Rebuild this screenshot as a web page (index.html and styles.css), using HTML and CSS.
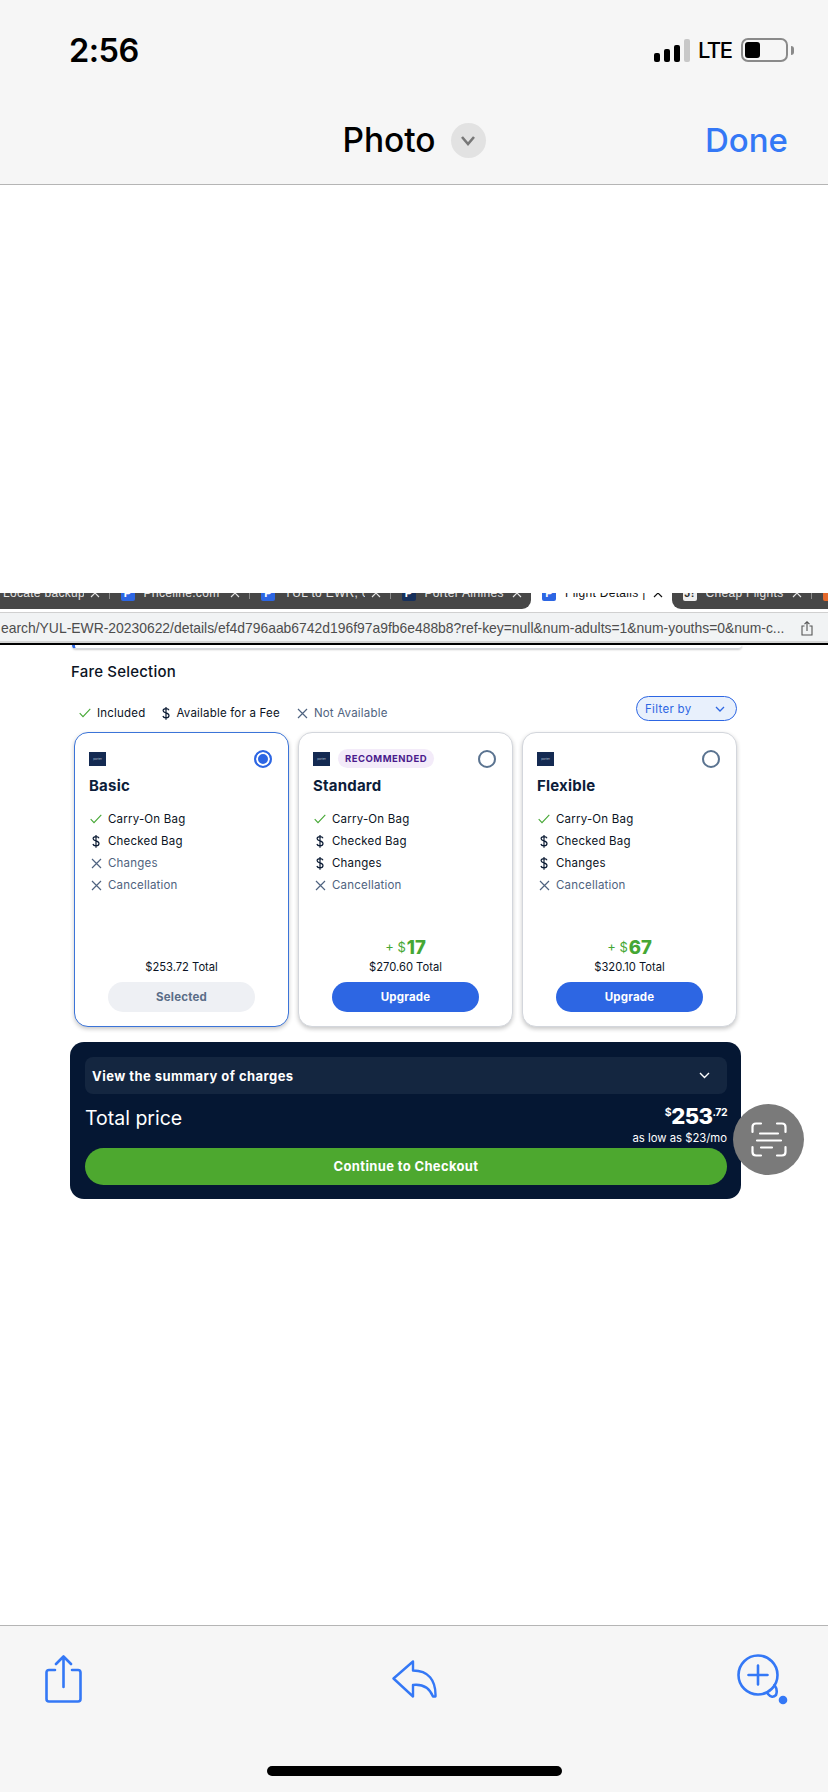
FILE: index.html
```html
<!DOCTYPE html>
<html lang="en">
<head>
  <meta charset="UTF-8" />
  <meta name="viewport" content="width=device-width, initial-scale=1.0"/>
  <title>Photo</title>
  <link rel="stylesheet" href="styles.css">
</head>
<body>
  <svg class="defs" width="0" height="0">
    <symbol id="i-check" viewBox="0 0 12 10"><path d="M.7 5.2 4 8.6 11.3 .8" fill="none" stroke="#45a734" stroke-width="1.1"/></symbol>
    <symbol id="i-cross" viewBox="0 0 11 11"><path d="M1 1 10 10M10 1 1 10" fill="none" stroke="#4f6380" stroke-width="1.2"/></symbol>
    <symbol id="i-fee" viewBox="0 0 8 13"><path d="M7 3.2C6.6 2.2 5.5 1.7 4 1.7 2.3 1.7 1.1 2.5 1.1 3.8 1.1 6.6 7 5.2 7 8.6 7 10 5.7 10.9 4 10.9 2.4 10.9 1.2 10.2.9 9M4 0V12.8" fill="none" stroke="#0a1a33" stroke-width="1.2"/></symbol>
    <symbol id="i-tabx" viewBox="0 0 10 10"><path d="M1 1 9 9M9 1 1 9" fill="none" stroke="currentColor" stroke-width="1.2"/></symbol>
  </svg>

  <header class="topbar">
    <div class="status">
      <span class="time">2:56</span>
      <div class="status-right">
        <div class="signal"><i class="b1"></i><i class="b2"></i><i class="b3"></i><i class="b4"></i></div>
        <span class="lte">LTE</span>
        <div class="battery"><i></i></div>
        <div class="nub"></div>
      </div>
    </div>
    <div class="titlebar">
      <span></span>
      <div class="title">
        <span>Photo</span>
        <span class="title-chev"><svg width="16" height="11" viewBox="0 0 16 11"><path d="M2 2 8 9 14 2" fill="none" stroke="#777" stroke-width="2.6"/></svg></span>
      </div>
      <span class="done">Done</span>
    </div>
  </header>

  <main class="viewer">
    <div class="shot">
      <div class="tabs">
        <div class="tab tab-first"><span class="tab-label">Locate backups</span><svg class="tab-x"><use href="#i-tabx"/></svg><i class="tab-sep"></i></div>
        <div class="tab"><b class="fav">P</b><span class="tab-label">Priceline.com</span><svg class="tab-x"><use href="#i-tabx"/></svg><i class="tab-sep"></i></div>
        <div class="tab"><b class="fav">P</b><span class="tab-label">YUL to EWR, 6/22</span><svg class="tab-x"><use href="#i-tabx"/></svg><i class="tab-sep"></i></div>
        <div class="tab tab-before"><b class="fav fav-porter">P</b><span class="tab-label">Porter Airlines |</span><svg class="tab-x"><use href="#i-tabx"/></svg></div>
        <div class="tab tab-active"><b class="fav">P</b><span class="tab-label">Flight Details | F</span><svg class="tab-x"><use href="#i-tabx"/></svg></div>
        <div class="tab tab-after"><b class="fav fav-white">J!</b><span class="tab-label">Cheap Flights fr</span><svg class="tab-x"><use href="#i-tabx"/></svg><i class="tab-sep"></i></div>
        <div class="tab"><b class="fav fav-orange"></b></div>
      </div>
      <div class="urlbar">
        <span class="url">earch/YUL-EWR-20230622/details/ef4d796aab6742d196f97a9fb6e488b8?ref-key=null&amp;num-adults=1&amp;num-youths=0&amp;num-c...</span>
        <svg class="url-share" width="12" height="15" viewBox="0 0 12 15"><path d="M3.5 5H1V14H11V5H8.5M6 10V1M3.5 3.2 6 .8 8.5 3.2" fill="none" stroke="#555" stroke-width="1.1"/></svg>
      </div>

      <div class="page">
        <div class="prev-card"></div>
        <h2 class="fare-title">Fare Selection</h2>
        <div class="legend">
          <div class="legend-items">
            <span class="legend-item"><svg class="ic ic-check"><use href="#i-check"/></svg>Included</span>
            <span class="legend-item"><svg class="ic ic-fee"><use href="#i-fee"/></svg>Available for a Fee</span>
            <span class="legend-item muted"><svg class="ic ic-cross"><use href="#i-cross"/></svg>Not Available</span>
          </div>
          <div class="filter">Filter by<svg width="10" height="6" viewBox="0 0 10 6"><path d="M1 1 5 5 9 1" fill="none" stroke="#2d66e3" stroke-width="1.3"/></svg></div>
        </div>

        <div class="cards">
          <section class="card card-selected">
            <div class="card-head">
              <div class="logo">porter</div>
              <span class="radio radio-on"></span>
            </div>
            <h3>Basic</h3>
            <ul class="features">
              <li><span class="fi"><svg class="ic ic-check"><use href="#i-check"/></svg></span>Carry-On Bag</li>
              <li><span class="fi"><svg class="ic ic-fee"><use href="#i-fee"/></svg></span>Checked Bag</li>
              <li class="muted"><span class="fi"><svg class="ic ic-cross"><use href="#i-cross"/></svg></span>Changes</li>
              <li class="muted"><span class="fi"><svg class="ic ic-cross"><use href="#i-cross"/></svg></span>Cancellation</li>
            </ul>
            <div class="card-foot">
              <div class="total">$253.72 Total</div>
              <button class="btn btn-selected">Selected</button>
            </div>
          </section>

          <section class="card">
            <div class="card-head">
              <div class="logo">porter</div>
              <span class="badge">RECOMMENDED</span>
              <span class="radio"></span>
            </div>
            <h3>Standard</h3>
            <ul class="features">
              <li><span class="fi"><svg class="ic ic-check"><use href="#i-check"/></svg></span>Carry-On Bag</li>
              <li><span class="fi"><svg class="ic ic-fee"><use href="#i-fee"/></svg></span>Checked Bag</li>
              <li><span class="fi"><svg class="ic ic-fee"><use href="#i-fee"/></svg></span>Changes</li>
              <li class="muted"><span class="fi"><svg class="ic ic-cross"><use href="#i-cross"/></svg></span>Cancellation</li>
            </ul>
            <div class="card-foot">
              <div class="extra">+ $<b>17</b></div>
              <div class="total">$270.60 Total</div>
              <button class="btn">Upgrade</button>
            </div>
          </section>

          <section class="card">
            <div class="card-head">
              <div class="logo">porter</div>
              <span class="radio"></span>
            </div>
            <h3>Flexible</h3>
            <ul class="features">
              <li><span class="fi"><svg class="ic ic-check"><use href="#i-check"/></svg></span>Carry-On Bag</li>
              <li><span class="fi"><svg class="ic ic-fee"><use href="#i-fee"/></svg></span>Checked Bag</li>
              <li><span class="fi"><svg class="ic ic-fee"><use href="#i-fee"/></svg></span>Changes</li>
              <li class="muted"><span class="fi"><svg class="ic ic-cross"><use href="#i-cross"/></svg></span>Cancellation</li>
            </ul>
            <div class="card-foot">
              <div class="extra">+ $<b>67</b></div>
              <div class="total">$320.10 Total</div>
              <button class="btn">Upgrade</button>
            </div>
          </section>
        </div>

        <div class="checkout">
          <div class="summary">
            <span>View the summary of charges</span>
            <svg width="11" height="7" viewBox="0 0 11 7"><path d="M1 1 5.5 5.5 10 1" fill="none" stroke="#fff" stroke-width="1.4"/></svg>
          </div>
          <div class="price-row">
            <span class="price-label">Total price</span>
            <div class="price">
              <div class="price-main"><sup>$</sup>253<sup>.72</sup></div>
              <div class="price-month">as low as $23/mo</div>
            </div>
          </div>
          <div class="continue">Continue to Checkout</div>
        </div>
      </div>

      <div class="scan">
        <svg width="36" height="35" viewBox="0 0 36 35"><path d="M1.500 10V5Q1.500 1.500 5 1.500H10M26 1.500H31Q34.500 1.500 34.500 5V10M1.500 25V30Q1.500 33.500 5 33.500H10M26 33.500H31Q34.500 33.500 34.500 30V25M9 11.500H27M6 18.500H30M10 25.500H21" fill="none" stroke="#fff" stroke-width="2.200" stroke-linecap="round"/></svg>
      </div>
    </div>
  </main>

  <footer class="toolbar">
    <div class="tools">
      <svg class="tool-share" width="37" height="48" viewBox="0 0 37 48"><path d="M10 15H4Q1.500 15 1.500 17.500V44Q1.500 46.500 4 46.500H33Q35.500 46.500 35.500 44V17.500Q35.500 15 33 15H27M18.500 32V1.500M11 9 18.500 1.500 26 9" fill="none" stroke="#3478f6" stroke-width="2.600" stroke-linecap="round" stroke-linejoin="round"/></svg>
      <svg class="tool-back" width="45" height="38" viewBox="0 0 45 38"><path d="M21 1.500 1.500 18.500 21 36.500V25C30 24 37 27 41 36.500H43.500C44 20 36 10.500 21 10.500Z" fill="none" stroke="#3478f6" stroke-width="2.400" stroke-linejoin="round"/></svg>
      <svg class="tool-zoom" width="51" height="51" viewBox="0 0 51 51"><circle cx="21" cy="21" r="19.500" fill="none" stroke="#3478f6" stroke-width="2.600"/><path d="M21 11.500V30.500M11.500 21H30.500M37.500 31Q41 36 39 41 35 45 31 40" fill="none" stroke="#3478f6" stroke-width="2.600" stroke-linecap="round"/><circle cx="46" cy="46" r="4.300" fill="#3478f6"/></svg>
    </div>
    <div class="home-bar"></div>
  </footer>
</body>
</html>
```

FILE: styles.css
```css
* {
  box-sizing: border-box;
}
html, body {
  margin: 0;
  padding: 0;
}
body {
  width: 828px;
  height: 1792px;
  display: flex;
  flex-direction: column;
  overflow: hidden;
  background: #fff;
  font-family: Inter, "Liberation Sans", sans-serif;
  color: #000;
}
.defs {
  display: block;
  height: 0;
}

/* top bar */
.topbar {
  height: 185px;
  background: #f6f6f6;
  border-bottom: 1px solid #b5b5b5;
  padding-top: 30px;
}
.status {
  height: 40px;
  display: flex;
  justify-content: space-between;
  align-items: center;
  padding: 0 34px 0 69px;
}
.time {
  font-size: 32.500px;
  font-weight: 600;
  letter-spacing: -0.500px;
}
.status-right {
  display: flex;
  align-items: center;
}
.signal {
  display: flex;
  align-items: flex-end;
  gap: 4px;
  height: 23px;
  margin-right: 8px;
}
.signal i {
  width: 6px;
  background: #000;
  border-radius: 2px;
}
.signal .b1 { height: 9px; }
.signal .b2 { height: 13px; }
.signal .b3 { height: 17px; }
.signal .b4 { height: 23px; background: #c8c8c8; }
.lte {
  width: 43px;
  font-size: 22px;
  font-weight: 500;
  letter-spacing: -1.500px;
}
.battery {
  width: 47px;
  height: 24px;
  border: 2px solid #8a8a8a;
  border-radius: 7px;
  padding: 2px;
}
.battery i {
  display: block;
  width: 15px;
  height: 100%;
  background: #000;
  border-radius: 3px;
}
.nub {
  width: 3px;
  height: 9px;
  margin-left: 3px;
  background: #8a8a8a;
  border-radius: 0 3px 3px 0;
}
.titlebar {
  height: 40px;
  margin-top: 50px;
  padding: 0 40px;
  display: grid;
  grid-template-columns: 1fr auto 1fr;
  align-items: center;
}
.title {
  display: flex;
  align-items: center;
  gap: 15px;
  font-size: 33.500px;
  font-weight: 500;
}
.title-chev {
  width: 35px;
  height: 35px;
  border-radius: 50%;
  background: #e2e2e2;
  display: flex;
  align-items: center;
  justify-content: center;
}
.done {
  justify-self: end;
  font-size: 33px;
  font-weight: 500;
  color: #3478f6;
}

/* photo area */
.viewer {
  flex: 1;
  padding-top: 408px;
  background: #fff;
}
.shot {
  position: relative;
  height: 606px;
  overflow: hidden;
}
.tabs {
  display: flex;
  height: 16px;
  margin-left: -31px;
  overflow: hidden;
  background: #fff;
}
.tab {
  flex: 0 0 140.500px;
  min-width: 0;
  height: 25px;
  margin-top: -9px;
  padding: 0 0 7px 11px;
  display: flex;
  align-items: center;
  overflow: hidden;
  background: #474747;
  color: #e4e4e4;
  font-family: "Liberation Sans", sans-serif;
  font-size: 12px;
  letter-spacing: 0.300px;
}
.tab-first {
  padding-left: 34px;
}
.tab-before {
  border-bottom-right-radius: 9px;
}
.tab-after {
  border-bottom-left-radius: 9px;
}
.tab-active {
  background: #fff;
  color: #111;
}
.fav {
  flex: none;
  width: 14px;
  height: 15px;
  margin-right: 9px;
  border-radius: 2px;
  background: #2d66e3;
  color: #fff;
  font-size: 11px;
  line-height: 15px;
  text-align: center;
}
.fav-porter {
  background: #17305c;
}
.fav-white {
  background: #eee;
  color: #333;
}
.fav-orange {
  background: #e5682a;
}
.tab-label {
  flex: 1;
  min-width: 0;
  white-space: nowrap;
  overflow: hidden;
}
.tab-x {
  flex: none;
  width: 10px;
  height: 10px;
  margin: 0 9px 0 6px;
}
.tab-sep {
  flex: none;
  width: 1px;
  height: 11px;
  background: #8a8a8a;
}
.urlbar {
  height: 33px;
  margin-top: 3px;
  padding: 0 15px 0 1px;
  display: flex;
  align-items: center;
  justify-content: space-between;
  background: #f1f3f4;
  border-top: 1px solid #d0d0d0;
  border-bottom: 2px solid #000;
  box-shadow: inset 0 -2px 0 #d5d5d5;
  color: #4d4d4d;
  font-family: "Liberation Sans", sans-serif;
  font-size: 13.900px;
}
.url {
  white-space: nowrap;
}
.page {
  padding: 0 87px 0 70px;
}
.prev-card {
  height: 4px;
  margin: 0 -1px 0 2px;
  border-bottom: 1px solid #d5d8de;
  border-left: 3px solid #2d66e3;
  border-radius: 0 0 8px 8px;
  box-shadow: 0 1px 2px rgba(0,0,0,.2);
}
.fare-title {
  margin: 13px 0 0 1px;
  font-size: 15px;
  line-height: 20px;
  font-weight: 500;
  letter-spacing: 0.200px;
  color: #0b1324;
}
.legend {
  height: 25px;
  margin: 14px 0 0 9px;
  display: flex;
  justify-content: space-between;
  align-items: center;
}
.legend-items {
  display: flex;
  align-items: center;
  gap: 17px;
  padding-top: 9px;
  font-size: 11.500px;
  letter-spacing: 0.200px;
  color: #0b1324;
}
.legend-item {
  display: flex;
  align-items: center;
  gap: 6px;
}
.muted {
  color: #4f6380;
}
.ic {
  display: block;
  flex: none;
}
.ic-check { width: 12px; height: 10px; }
.ic-cross { width: 11px; height: 11px; }
.ic-fee { width: 8px; height: 13px; }
.filter {
  width: 101px;
  height: 25px;
  margin-right: 4px;
  padding: 0 11px 0 8px;
  display: flex;
  align-items: center;
  justify-content: space-between;
  background: #e8f0fc;
  border: 1px solid #2d66e3;
  border-radius: 13px;
  color: #2d66e3;
  font-size: 11.500px;
  letter-spacing: 0.300px;
}

/* fare cards */
.cards {
  display: grid;
  grid-template-columns: repeat(3, 215px);
  gap: 9px;
  margin: 11px 0 0 4px;
}
.card {
  height: 295px;
  padding: 16px 14px 14px;
  display: flex;
  flex-direction: column;
  background: #fff;
  border: 1px solid #d3d6dc;
  border-radius: 14px;
  box-shadow: 0 2px 4px rgba(0,0,0,.22);
}
.card-selected {
  border-color: #3b74d8;
}
.card-head {
  height: 19px;
  display: flex;
  align-items: center;
  gap: 8px;
}
.logo {
  width: 17px;
  height: 14px;
  background: #142a52;
  color: #b8c2d4;
  font-size: 3px;
  line-height: 14px;
  text-align: center;
}
.badge {
  height: 19px;
  padding: 0 7px;
  background: #f3ebf9;
  border-radius: 10px;
  color: #4a1a8c;
  font-size: 9.500px;
  font-weight: 700;
  line-height: 19px;
  letter-spacing: 0.500px;
}
.radio {
  width: 18px;
  height: 18px;
  margin: 0 2px 0 auto;
  border: 2px solid #5a7390;
  border-radius: 50%;
}
.radio-on {
  border-color: #2d66e3;
  background: #2d66e3;
  box-shadow: inset 0 0 0 2px #fff;
}
.card h3 {
  margin: 8px 0 0 0;
  font-size: 15px;
  line-height: 20px;
  font-weight: 700;
  letter-spacing: 0.200px;
  color: #0c1d3a;
}
.features {
  list-style: none;
  margin: 12px 0 0 0;
  padding: 0;
  font-size: 11.500px;
  letter-spacing: 0.200px;
  color: #0b1324;
}
.features li {
  height: 22px;
  display: flex;
  align-items: center;
}
.fi {
  width: 19px;
  display: flex;
  justify-content: center;
  padding-right: 5px;
}
.card-foot {
  margin-top: auto;
  display: flex;
  flex-direction: column;
  align-items: center;
}
.extra {
  height: 24px;
  display: flex;
  align-items: center;
  gap: 1px;
  color: #45a734;
  font-size: 13px;
}
.extra b {
  font-size: 18.500px;
  font-weight: 800;
}
.total {
  height: 16px;
  margin-bottom: 7px;
  color: #0b1324;
  font-size: 11.200px;
  line-height: 16px;
}
.btn {
  width: 147px;
  height: 30px;
  padding: 0;
  border: none;
  border-radius: 15px;
  background: #2d66e3;
  color: #fff;
  font-family: inherit;
  font-size: 11.500px;
  font-weight: 700;
  letter-spacing: 0.200px;
}
.btn-selected {
  background: #eef0f4;
  color: #5a6d87;
}

/* checkout panel */
.checkout {
  height: 157px;
  margin-top: 15px;
  padding: 15px 14px 0 15px;
  background: #051733;
  border-radius: 14px;
  color: #fff;
}
.summary {
  height: 37px;
  padding: 0 17px 0 7px;
  display: flex;
  align-items: center;
  justify-content: space-between;
  background: #142640;
  border-radius: 8px;
  font-size: 13px;
  font-weight: 700;
  letter-spacing: 0.450px;
}
.price-row {
  height: 54px;
  display: flex;
  justify-content: space-between;
}
.price-label {
  margin-top: 13px;
  font-size: 19.500px;
  line-height: 22px;
}
.price {
  text-align: right;
}
.price-main {
  margin-top: 9px;
  font-size: 22px;
  font-weight: 800;
  line-height: 26px;
  letter-spacing: -0.500px;
}
.price-main sup {
  font-size: 10.500px;
  font-weight: 700;
  line-height: 0;
  vertical-align: 8px;
}
.price-month {
  margin-top: 2px;
  font-size: 11.300px;
  line-height: 14px;
}
.continue {
  height: 37px;
  background: #4da82f;
  border-radius: 19px;
  font-size: 13px;
  font-weight: 700;
  line-height: 37px;
  letter-spacing: 0.350px;
  text-align: center;
}
.scan {
  position: absolute;
  left: 733px;
  top: 511px;
  width: 71px;
  height: 71px;
  display: flex;
  align-items: center;
  justify-content: center;
  border-radius: 50%;
  background: #7a7a7a;
}

/* bottom toolbar */
.toolbar {
  height: 167px;
  background: #f6f6f6;
  border-top: 1px solid #b5b5b5;
  padding: 27px 40px 0;
}
.tools {
  height: 52px;
  display: grid;
  grid-template-columns: 1fr auto 1fr;
  align-items: center;
}
.tool-share {
  margin-left: 5px;
}
.tool-zoom {
  justify-self: end;
}
.home-bar {
  width: 295px;
  height: 10px;
  margin: 61px auto 0;
  background: #000;
  border-radius: 5px;
}
```
